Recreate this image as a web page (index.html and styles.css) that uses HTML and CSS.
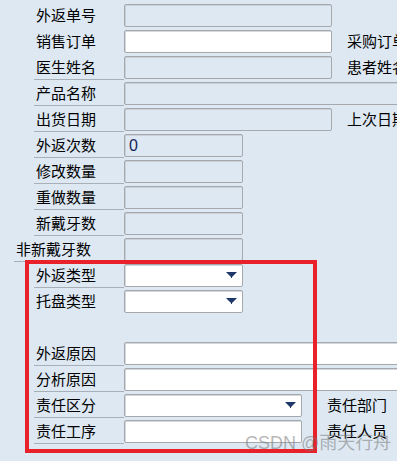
FILE: index.html
```html
<!DOCTYPE html>
<html lang="zh-CN">
<head>
<meta charset="UTF-8">
<meta name="viewport" content="width=device-width, initial-scale=1.0">
<title>外返登记</title>
<link rel="stylesheet" href="styles.css">
</head>
<body>
<div class="formulario">
    <div class="fila">
        <div class="etiqueta">外返单号</div>
        <div class="campo bloqueado largo"></div>
    </div>
    <div class="fila">
        <div class="etiqueta">销售订单</div>
        <div class="campo largo"></div>
        <div class="etiqueta-der">采购订单</div>
    </div>
    <div class="fila">
        <div class="etiqueta linea">医生姓名</div>
        <div class="campo bloqueado largo"></div>
        <div class="etiqueta-der linea">患者姓名</div>
    </div>
    <div class="fila">
        <div class="etiqueta linea">产品名称</div>
        <div class="campo bloqueado completo"></div>
    </div>
    <div class="fila">
        <div class="etiqueta linea">出货日期</div>
        <div class="campo bloqueado largo"></div>
        <div class="etiqueta-der linea">上次日期</div>
    </div>
    <div class="fila">
        <div class="etiqueta linea">外返次数</div>
        <div class="campo bloqueado corto"><span class="valor">0</span></div>
    </div>
    <div class="fila">
        <div class="etiqueta linea">修改数量</div>
        <div class="campo bloqueado corto"></div>
    </div>
    <div class="fila">
        <div class="etiqueta linea">重做数量</div>
        <div class="campo bloqueado corto"></div>
    </div>
    <div class="fila">
        <div class="etiqueta linea">新戴牙数</div>
        <div class="campo bloqueado corto"></div>
    </div>
    <div class="fila">
        <div class="etiqueta linea ancha">非新戴牙数</div>
        <div class="campo bloqueado corto"></div>
    </div>
    <div class="fila">
        <div class="etiqueta linea">外返类型</div>
        <div class="campo corto lista"><svg class="flecha" width="11" height="6" viewBox="0 0 11 6"><path d="M0 0H11L6 5V6H5V5Z" fill="#1e3769"/></svg></div>
    </div>
    <div class="fila">
        <div class="etiqueta">托盘类型</div>
        <div class="campo corto lista"><svg class="flecha" width="11" height="6" viewBox="0 0 11 6"><path d="M0 0H11L6 5V6H5V5Z" fill="#1e3769"/></svg></div>
    </div>
    <div class="fila"></div>
    <div class="fila">
        <div class="etiqueta linea">外返原因</div>
        <div class="campo completo"></div>
    </div>
    <div class="fila">
        <div class="etiqueta linea">分析原因</div>
        <div class="campo completo"></div>
    </div>
    <div class="fila">
        <div class="etiqueta linea">责任区分</div>
        <div class="campo medio lista"><svg class="flecha" width="11" height="6" viewBox="0 0 11 6"><path d="M0 0H11L6 5V6H5V5Z" fill="#1e3769"/></svg></div>
        <div class="etiqueta-der linea corta">责任部门</div>
    </div>
    <div class="fila">
        <div class="etiqueta linea">责任工序</div>
        <div class="campo medio"></div>
        <div class="etiqueta-der linea corta">责任人员</div>
    </div>
</div>
<div class="marco"></div>
<div class="marca">CSDN @雨天行舟</div>
</body>
</html>
```

FILE: styles.css
```css
body {
    margin: 0;
    background-color: #dde8f3;
    font-family: "Noto Sans CJK SC", "Liberation Sans", sans-serif;
    font-size: 15px;
    color: #000;
    overflow: hidden;
    height: 461px;
    position: relative;
}
.formulario {
    padding-top: 2px;
    display: flex;
    flex-direction: column;
}
.fila {
    display: flex;
    align-items: flex-start;
    height: 26px;
    white-space: nowrap;
}
.etiqueta {
    box-sizing: border-box;
    margin-left: 34px;
    width: 90px;
    height: 26px;
    padding: 3px 0 0 2px;
    line-height: 20px;
    border-bottom: 1px solid transparent;
    flex-shrink: 0;
}
.etiqueta.ancha {
    margin-left: 14px;
    width: 110px;
}
.linea {
    border-bottom-color: #a7afb8;
}
.etiqueta-der {
    box-sizing: border-box;
    margin-left: 11px;
    height: 26px;
    padding: 3px 0 0 4px;
    line-height: 20px;
    border-bottom: 1px solid transparent;
    flex-grow: 1;
}
.etiqueta-der.corta {
    margin-left: 22px;
    padding-left: 3px;
    flex-grow: 0;
    width: 62px;
}
.campo {
    box-sizing: border-box;
    margin-top: 2px;
    height: 23px;
    background: #fff;
    border: 1px solid #a5a9ae;
    border-radius: 2px;
    box-shadow: inset 1px 1px 0 #d4d7db;
    flex-shrink: 0;
    display: flex;
    align-items: center;
}
.bloqueado {
    background: #dde8f3;
    box-shadow: inset 1px 1px 0 #c9d0d8;
}
.largo { width: 208px; }
.corto { width: 119px; }
.medio { width: 178px; }
.completo { width: 300px; }
.lista {
    justify-content: flex-end;
    padding-right: 5px;
}
.flecha {
    display: block;
    margin-bottom: 1px;
}
.valor {
    font-family: "Liberation Sans", sans-serif;
    font-size: 16px;
    color: #14245a;
    padding-left: 4px;
}
.marco {
    position: absolute;
    left: 25px;
    top: 260px;
    width: 292px;
    height: 193px;
    box-sizing: border-box;
    border: 4px solid #e8212b;
}
.marca {
    position: absolute;
    left: 245px;
    top: 428px;
    font-family: "Liberation Sans", "Noto Sans CJK SC", sans-serif;
    font-size: 18px;
    color: rgba(120, 120, 120, 0.55);
    white-space: nowrap;
}
```
